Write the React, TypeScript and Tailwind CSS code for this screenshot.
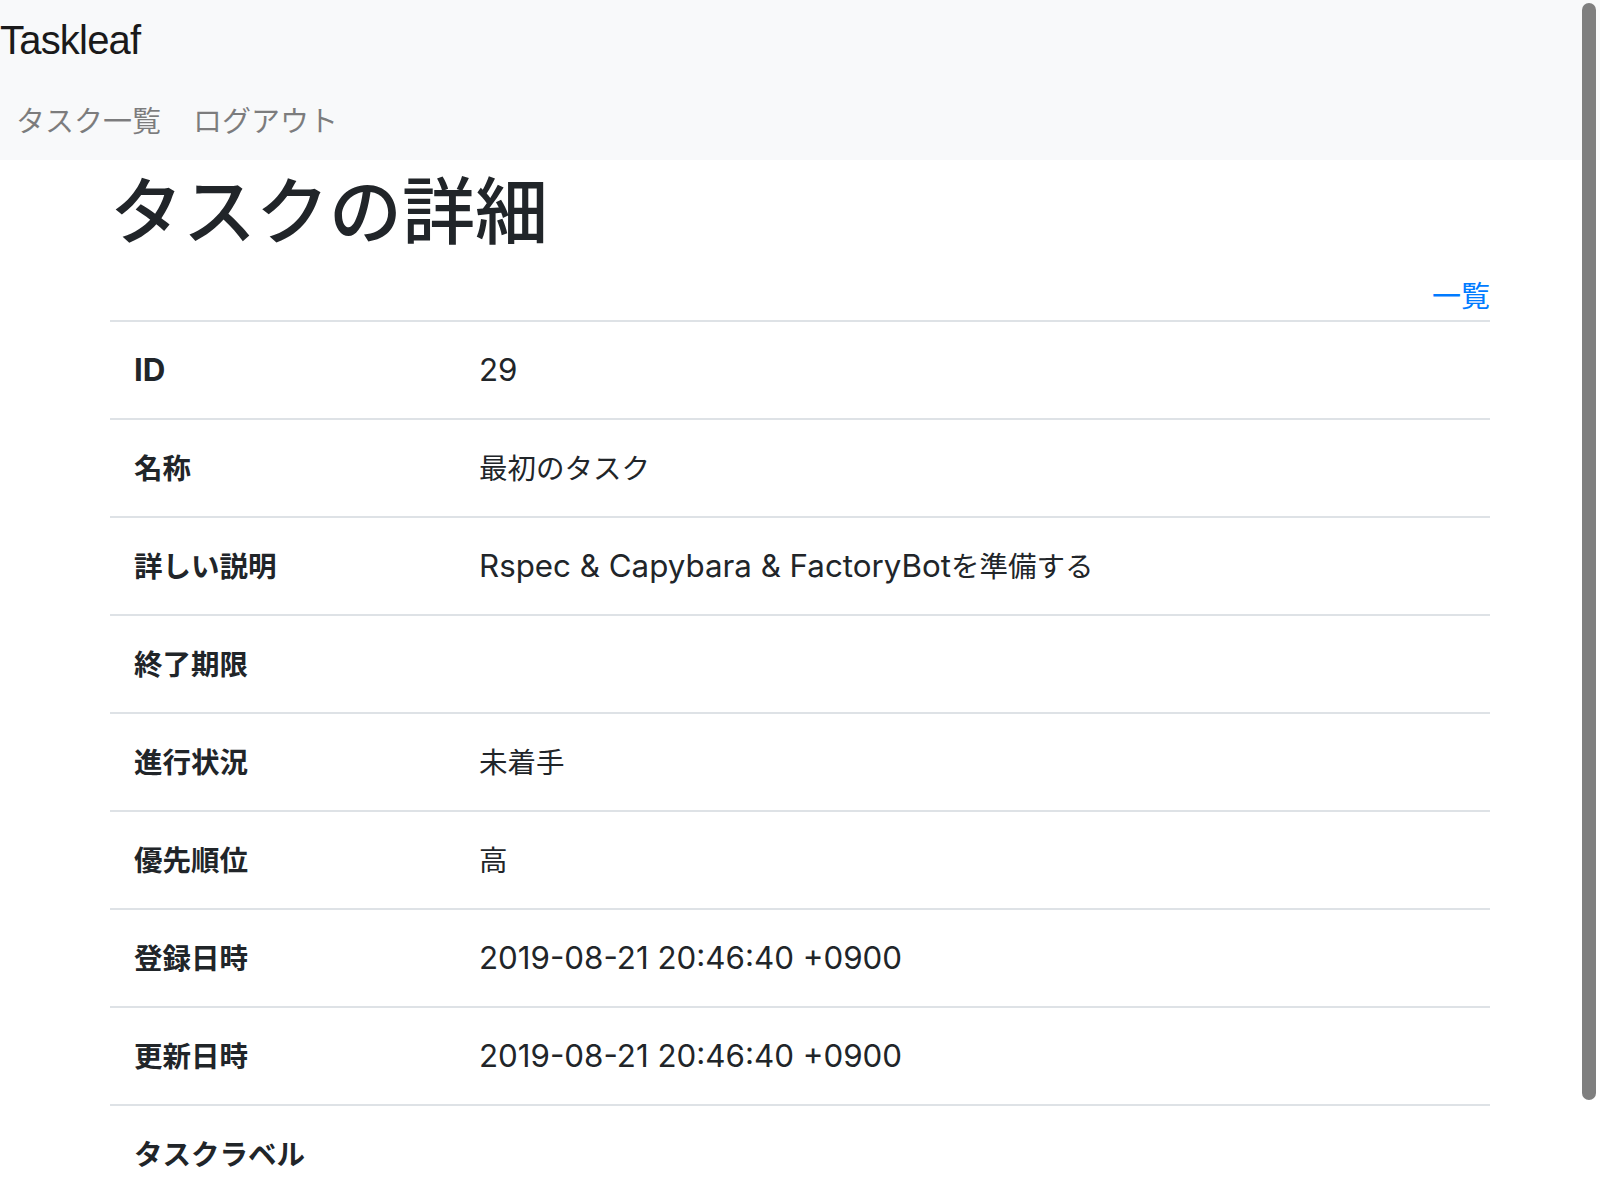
import React from "react";

const rows: { label: string; value: string }[] = [
  { label: "ID", value: "29" },
  { label: "名称", value: "最初のタスク" },
  { label: "詳しい説明", value: "Rspec & Capybara & FactoryBotを準備する" },
  { label: "終了期限", value: "" },
  { label: "進行状況", value: "未着手" },
  { label: "優先順位", value: "高" },
  { label: "登録日時", value: "2019-08-21 20:46:40 +0900" },
  { label: "更新日時", value: "2019-08-21 20:46:40 +0900" },
  { label: "タスクラベル", value: "" },
];

function Mixed({ text }: { text: string }) {
  const parts = text.split(/([\u3000-\u30ff\u3400-\u9fff\uff00-\uffef]+)/);
  return (
    <>
      {parts.map((part, i) =>
        i % 2 === 1 ? (
          <span key={i} className="text-[28.5px] leading-none">
            {part}
          </span>
        ) : (
          part
        )
      )}
    </>
  );
}

export default function App() {
  return (
    <div className="relative h-[1200px] overflow-hidden bg-white font-[Inter,'Noto_Sans_CJK_JP',sans-serif] text-[#212529]">
      {/* Navbar */}
      <nav className="h-[160px] bg-[#f8f9fa]">
        <div className="pt-[10px]">
          <a
            href="#"
            className="block font-['Liberation_Sans',sans-serif] text-[40px] leading-[60px] tracking-[-0.8px] text-[#1a1a1a]"
          >
            Taskleaf
          </a>
        </div>
        <ul className="mt-[28px] flex text-[29px] leading-[48px]">
          <li>
            <a href="#" className="px-[16px] text-[rgba(0,0,0,0.5)]">タスク一覧</a>
          </li>
          <li>
            <a href="#" className="px-[16px] text-[rgba(0,0,0,0.5)]">ログアウト</a>
          </li>
        </ul>
      </nav>

      {/* Content */}
      <div className="mx-auto w-[1440px] px-[30px]">
        <h1 className="mt-[7px] h-[89px] text-[73px] font-medium leading-[89px]">タスクの詳細</h1>

        <div className="mt-[17px] h-[47px] text-right text-[29px] leading-[48px]">
          <a href="#" className="text-[#007bff]">一覧</a>
        </div>

        <table className="w-full border-collapse text-[31.3px] leading-[48px]">
          <tbody>
            {rows.map((row) => (
              <tr key={row.label}>
                <th className="w-1/4 border-t-2 border-[#dee2e6] p-[24px] text-left align-top font-bold">
                  <Mixed text={row.label} />
                </th>
                <td className="border-t-2 border-[#dee2e6] p-[24px] align-top">
                  <Mixed text={row.value} />
                </td>
              </tr>
            ))}
          </tbody>
        </table>
      </div>

      {/* overlay scrollbar */}
      <div className="absolute right-[4px] top-[3px] h-[1097px] w-[14px] rounded-full bg-[#7f7f7f]" />
    </div>
  );
}
